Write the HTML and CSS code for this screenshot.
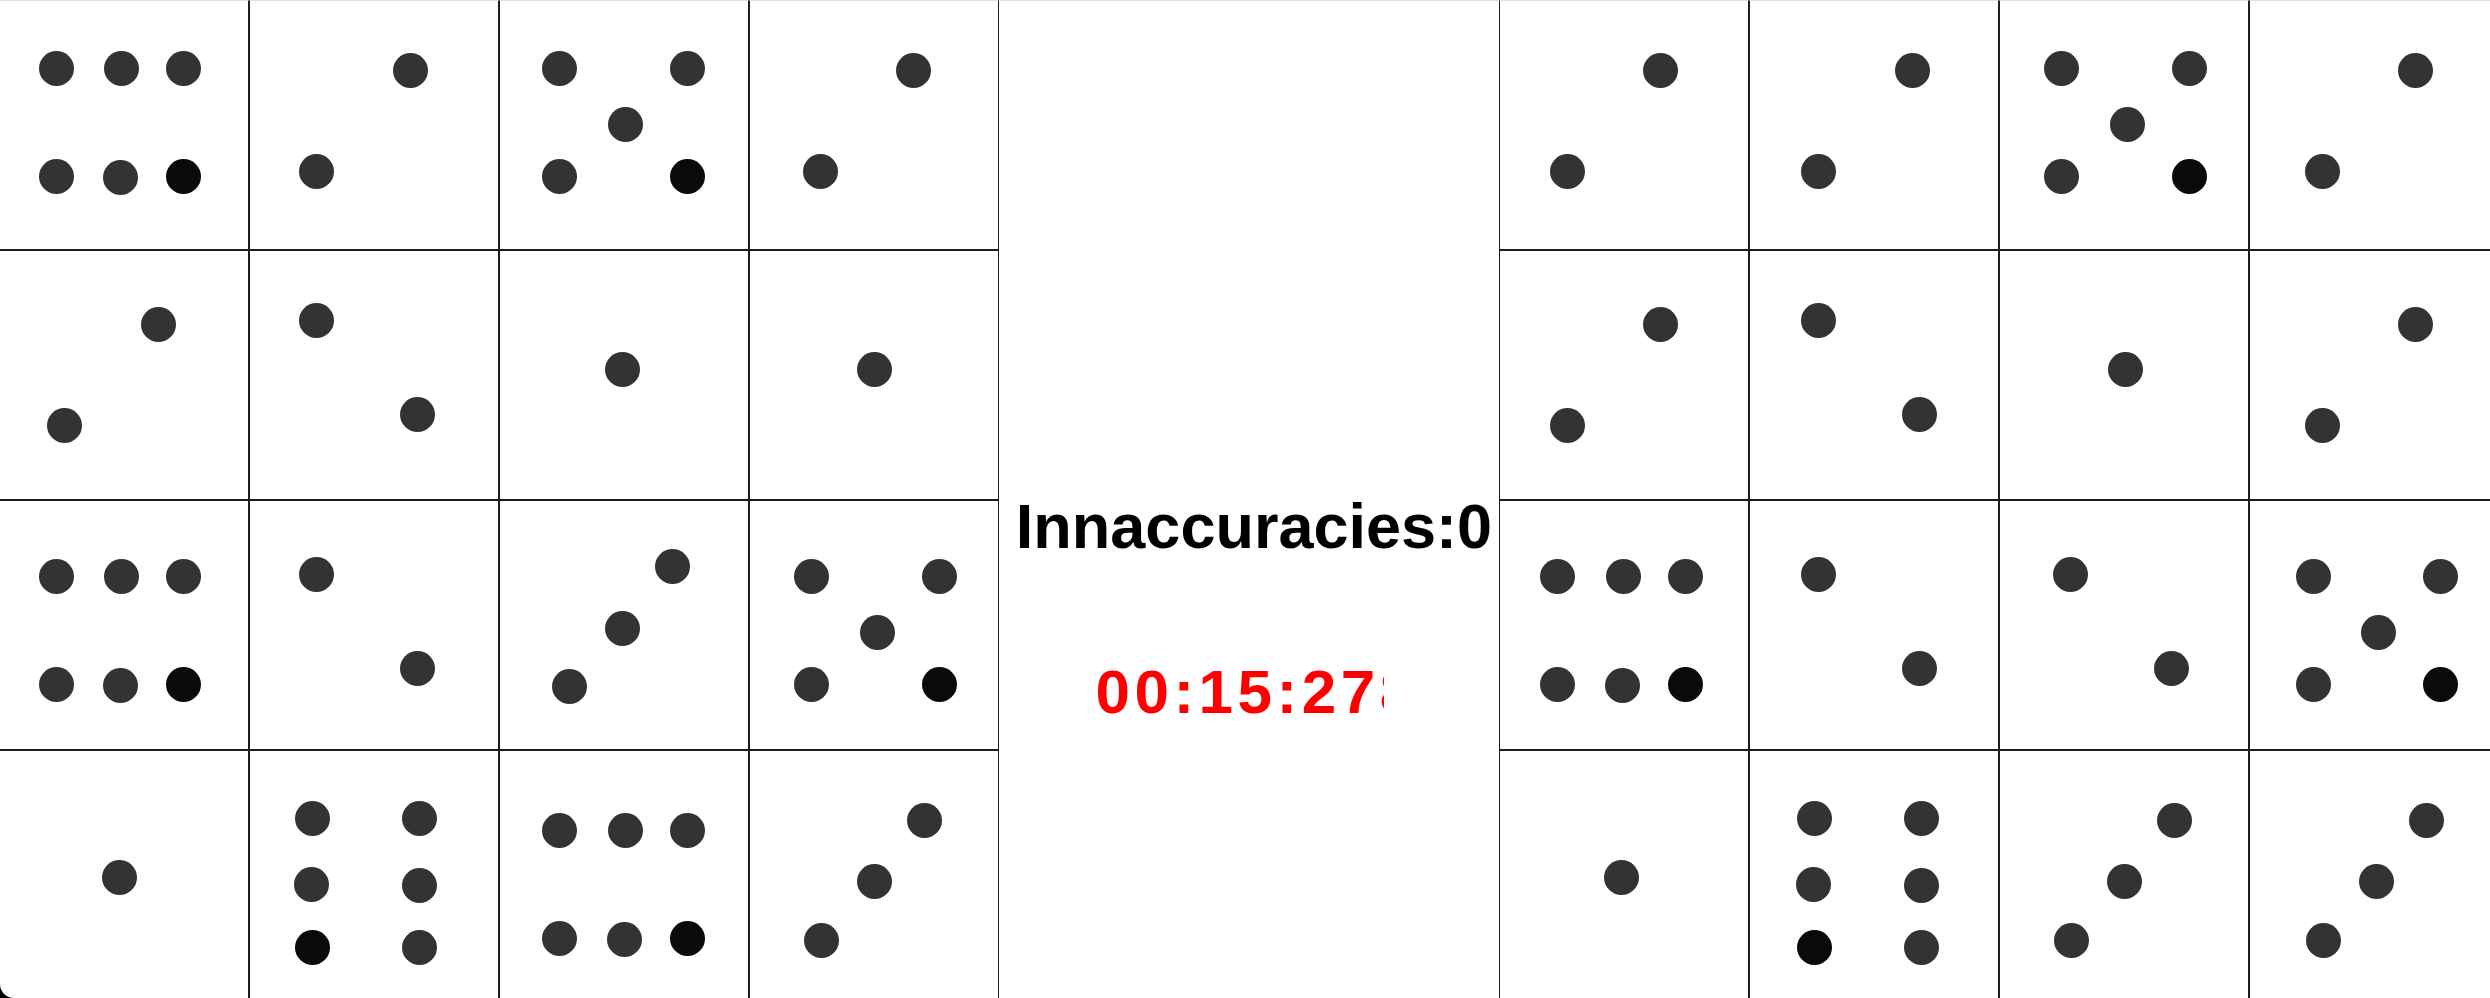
FILE: index.html
```html
<!DOCTYPE html>
<html lang="en">
<head>
    <meta charset="UTF-8">
    <meta name="viewport" content="width=device-width, initial-scale=1.0">
    <title>Dice Match</title>
    <link rel="stylesheet" href="styles.css">
</head>
<body>
    <div class="screen">
        <div class="board board-left" id="board-left"></div>
        <div class="status">
            <h2 class="misses">Innaccuracies:0</h2>
            <div class="timer">00:15:278</div>
        </div>
        <div class="board" id="board-right"></div>
    </div>
    <script>
        // pip centres inside each 250px die, third value marks the dark pip
        const LEFT_DICE = [
            [[57,68],[122,68],[184,68],[57,176],[121,177],[184,176,1]],
            [[161,70],[67,171]],
            [[60,68],[188,68],[126,124],[60,176],[188,176,1]],
            [[164,70],[71,171]],

            [[159,74],[65,175]],
            [[67,70],[168,164]],
            [[123,119]],
            [[125,119]],

            [[57,76],[122,76],[184,76],[57,184],[121,185],[184,184,1]],
            [[67,74],[168,168]],
            [[173,66],[123,128],[70,186]],
            [[62,76],[190,76],[128,132],[62,184],[190,184,1]],

            [[120,127]],
            [[63,68],[170,68],[62,134],[170,135],[63,197,1],[170,197]],
            [[60,80],[126,80],[188,80],[60,188],[125,189],[188,188,1]],
            [[175,70],[125,131],[72,190]]
        ];

        const RIGHT_DICE = [
            [[161,70],[68,171]],
            [[163,70],[69,171]],
            [[62,68],[190,68],[128,124],[62,176],[190,176,1]],
            [[166,70],[73,171]],

            [[161,74],[68,175]],
            [[69,70],[170,164]],
            [[126,119]],
            [[166,74],[73,175]],

            [[58,76],[124,76],[186,76],[58,184],[123,185],[186,184,1]],
            [[69,74],[170,168]],
            [[71,74],[172,168]],
            [[64,76],[191,76],[129,132],[64,184],[191,184,1]],

            [[122,127]],
            [[65,68],[172,68],[64,134],[172,135],[65,197,1],[172,197]],
            [[175,70],[125,131],[72,190]],
            [[177,70],[127,131],[74,190]]
        ];

        function buildBoard(id, dice) {
            const board = document.getElementById(id);
            dice.forEach(pips => {
                const cell = document.createElement('div');
                cell.className = 'cell';
                pips.forEach(([x, y, dark]) => {
                    const pip = document.createElement('span');
                    pip.className = dark ? 'pip dark' : 'pip';
                    pip.style.left = (x - 1) + 'px';
                    pip.style.top = (y - 1) + 'px';
                    cell.appendChild(pip);
                });
                board.appendChild(cell);
            });
        }

        buildBoard('board-left', LEFT_DICE);
        buildBoard('board-right', RIGHT_DICE);
    </script>
</body>
</html>
```

FILE: styles.css
```css
html {
    background-color: #000;
}
body {
    margin: 0;
    font-family: "Liberation Sans", Arial, sans-serif;
    overflow: hidden;
}
.screen {
    display: flex;
    width: 2490px;
    height: 998px;
    overflow: hidden;
    background-color: #fff;
    border-bottom-left-radius: 14px;
}
.board {
    flex: none;
    display: grid;
    grid-template-columns: repeat(4, 250px);
    grid-template-rows: repeat(4, 250px);
}
.board-left {
    margin-left: -1px;
}
.cell {
    position: relative;
    box-sizing: border-box;
    border: 1px solid #1e1e1e;
}
.cell:nth-child(-n+4) {
    border-top-color: #ddd;
}
.pip {
    position: absolute;
    width: 35px;
    height: 35px;
    margin: -17.5px 0 0 -17.5px;
    border-radius: 50%;
    background-color: #333;
}
.pip.dark {
    background-color: #0a0a0a;
}
.status {
    flex: none;
    width: 500px;
    box-sizing: border-box;
    border-top: 1px solid #ddd;
    padding-top: 489px;
    display: flex;
    flex-direction: column;
    align-items: center;
}
.misses {
    margin: 0 0 0 10px;
    font-size: 63px;
    line-height: 72px;
    font-weight: bold;
    color: #000;
    white-space: nowrap;
}
.timer {
    width: 288px;
    margin: 94px 19px 0 0;
    overflow: hidden;
    white-space: nowrap;
    font-size: 62px;
    line-height: 72px;
    font-weight: bold;
    letter-spacing: 4.5px;
    color: #f00;
}
```
